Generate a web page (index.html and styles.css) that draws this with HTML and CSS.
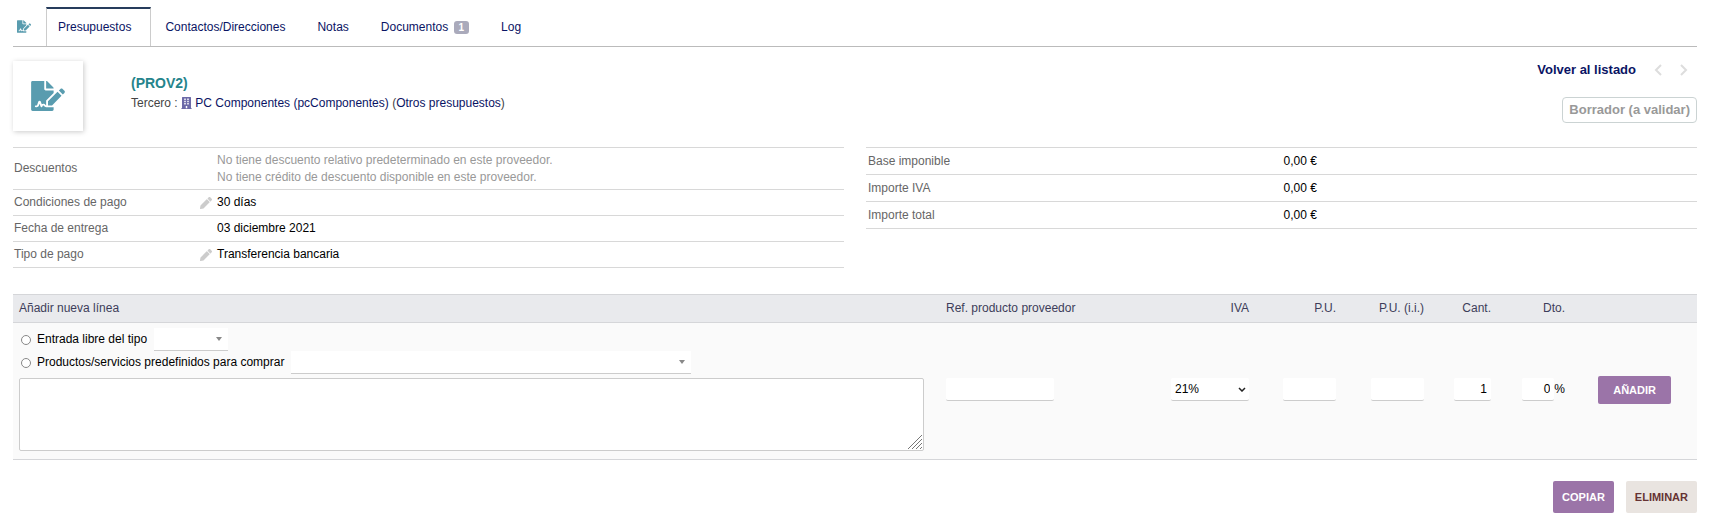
FILE: index.html
```html
<!DOCTYPE html>
<html lang="es">
<head>
<meta charset="utf-8">
<title>Presupuesto (PROV2)</title>
<link rel="stylesheet" href="styles.css">
</head>
<body>
<svg class="defs" aria-hidden="true">
  <symbol id="i-sign" viewBox="0 0 576 512"><path d="M218.170 424.140c-2.950-5.920-8.090-6.520-10.170-6.520s-7.220.59-10.020 6.190l-7.670 15.340c-6.370 12.780-25.030 11.370-29.480-2.090L144 386.590l-10.610 31.880c-5.890 17.660-22.380 29.530-41 29.530H80c-8.840 0-16-7.160-16-16s7.160-16 16-16h12.390c4.830 0 9.110-3.080 10.640-7.660l18.190-54.640c3.300-9.810 12.440-16.410 22.780-16.410s19.480 6.590 22.770 16.410l13.880 41.640c19.750-16.190 54.060-9.700 66 14.160 1.890 3.780 5.490 5.950 9.360 6.260v-82.120l128-127.090V160H248c-13.200 0-24-10.800-24-24V0H24C10.700 0 0 10.700 0 24v464c0 13.300 10.700 24 24 24h336c13.300 0 24-10.700 24-24v-40l-128-.110c-16.120-.310-30.580-9.280-37.830-23.750zM384 121.900c0-6.300-2.500-12.400-7-16.900L279.100 7c-4.500-4.500-10.600-7-17-7H256v128h128v-6.100zm-96 225.060V416h68.990l161.680-162.780-67.880-67.880L288 346.960zm280.540-179.630l-31.870-31.870c-9.940-9.940-26.070-9.940-36.010 0l-27.250 27.250 67.880 67.880 27.250-27.250c9.950-9.940 9.950-26.070 0-36.010z"/></symbol>
  <symbol id="i-building" viewBox="0 0 448 512"><path d="M436 480h-20V24c0-13.255-10.745-24-24-24H56C42.745 0 32 10.745 32 24v456H12c-6.627 0-12 5.373-12 12v20h448v-20c0-6.627-5.373-12-12-12zM128 76c0-6.627 5.373-12 12-12h40c6.627 0 12 5.373 12 12v40c0 6.627-5.373 12-12 12h-40c-6.627 0-12-5.373-12-12V76zm0 96c0-6.627 5.373-12 12-12h40c6.627 0 12 5.373 12 12v40c0 6.627-5.373 12-12 12h-40c-6.627 0-12-5.373-12-12v-40zm52 148h-40c-6.627 0-12-5.373-12-12v-40c0-6.627 5.373-12 12-12h40c6.627 0 12 5.373 12 12v40c0 6.627-5.373 12-12 12zm76 160h-64v-84c0-6.627 5.373-12 12-12h40c6.627 0 12 5.373 12 12v84zm64-172c0 6.627-5.373 12-12 12h-40c-6.627 0-12-5.373-12-12v-40c0-6.627 5.373-12 12-12h40c6.627 0 12 5.373 12 12v40zm0-96c0 6.627-5.373 12-12 12h-40c-6.627 0-12-5.373-12-12v-40c0-6.627 5.373-12 12-12h40c6.627 0 12 5.373 12 12v40zm0-96c0 6.627-5.373 12-12 12h-40c-6.627 0-12-5.373-12-12V76c0-6.627 5.373-12 12-12h40c6.627 0 12 5.373 12 12v40z"/></symbol>
  <symbol id="i-pencil" viewBox="0 0 512 512"><path d="M497.900 142.100l-46.100 46.100c-4.700 4.700-12.300 4.700-17 0l-111-111c-4.700-4.700-4.700-12.300 0-17l46.100-46.100c18.700-18.700 49.100-18.700 67.900 0l60.100 60.100c18.800 18.700 18.800 49.100 0 67.900zM284.200 99.800L21.600 362.400.4 483.900c-2.900 16.400 11.400 30.600 27.800 27.800l121.500-21.300 262.600-262.600c4.700-4.700 4.700-12.300 0-17l-111-111c-4.800-4.700-12.400-4.700-17.100 0z"/></symbol>
</svg>

<nav class="tabs">
  <svg class="tabs-icon" aria-hidden="true"><use href="#i-sign"/></svg>
  <a class="tab tab-active" href="#" aria-current="page">Presupuestos</a>
  <a class="tab" href="#">Contactos/Direcciones</a>
  <a class="tab" href="#">Notas</a>
  <a class="tab" href="#">Documentos <span class="badge">1</span></a>
  <a class="tab" href="#">Log</a>
</nav>

<header class="banner">
  <div class="photo"><svg class="photo-icon" aria-hidden="true"><use href="#i-sign"/></svg></div>
  <div class="ident">
    <h1 class="ref">(PROV2)</h1>
    <div class="third">Tercero : <svg class="building" aria-hidden="true"><use href="#i-building"/></svg> <a href="#">PC Componentes (pcComponentes)</a> (<a href="#">Otros presupuestos</a>)</div>
  </div>
  <div class="side">
    <div class="pager">
      <a class="back" href="#">Volver al listado</a>
      <svg class="chev" viewBox="0 0 8 12" aria-hidden="true"><path d="M7 1 2 6l5 5"/></svg>
      <svg class="chev" viewBox="0 0 8 12" aria-hidden="true"><path d="m1 1 5 5-5 5"/></svg>
    </div>
    <span class="status">Borrador (a validar)</span>
  </div>
</header>

<main>
  <div class="columns">
    <table class="info">
      <tr class="tall"><th scope="row">Descuentos</th><td class="edit"></td><td class="muted">No tiene descuento relativo predeterminado en este proveedor.<br>No tiene crédito de descuento disponible en este proveedor.</td></tr>
      <tr><th scope="row">Condiciones de pago</th><td class="edit"><a href="#" aria-label="Modificar"><svg class="pencil" aria-hidden="true"><use href="#i-pencil"/></svg></a></td><td>30 días</td></tr>
      <tr><th scope="row">Fecha de entrega</th><td class="edit"></td><td>03 diciembre 2021</td></tr>
      <tr><th scope="row">Tipo de pago</th><td class="edit"><a href="#" aria-label="Modificar"><svg class="pencil" aria-hidden="true"><use href="#i-pencil"/></svg></a></td><td>Transferencia bancaria</td></tr>
    </table>
    <table class="info totals">
      <tr><th scope="row">Base imponible</th><td>0,00 €</td></tr>
      <tr><th scope="row">Importe IVA</th><td>0,00 €</td></tr>
      <tr><th scope="row">Importe total</th><td>0,00 €</td></tr>
    </table>
  </div>

  <form>
    <table class="lines">
      <colgroup><col><col class="c-ref"><col class="c-vat"><col class="c-pu"><col class="c-pui"><col class="c-qty"><col class="c-disc"><col class="c-add"></colgroup>
      <thead>
        <tr><th class="left" scope="col">Añadir nueva línea</th><th class="left" scope="col">Ref. producto proveedor</th><th scope="col">IVA</th><th scope="col">P.U.</th><th scope="col">P.U. (i.i.)</th><th scope="col">Cant.</th><th scope="col">Dto.</th><td></td></tr>
      </thead>
      <tbody>
        <tr>
          <td class="left">
            <div class="choice"><input type="radio" name="kind" id="free"><label for="free">Entrada libre del tipo</label><select class="combo combo-s" aria-label="Tipo"><option></option></select></div>
            <div class="choice"><input type="radio" name="kind" id="predef"><label for="predef">Productos/servicios predefinidos para comprar</label><select class="combo combo-l" aria-label="Producto"><option></option></select></div>
            <div class="desc"><textarea aria-label="Descripción"></textarea><svg class="grip" viewBox="0 0 14 14" aria-hidden="true"><path d="M0 14 14 0M4 14 14 4M8 14l6-6M12 14l2-2"/></svg></div>
          </td>
          <td class="left"><input class="field f-ref" type="text" aria-label="Ref. producto proveedor"></td>
          <td><select class="field f-vat" aria-label="IVA"><option>21%</option></select></td>
          <td><input class="field f-pu" type="text" aria-label="P.U."></td>
          <td><input class="field f-pu" type="text" aria-label="P.U. (i.i.)"></td>
          <td><input class="field f-qty" type="text" value="1" aria-label="Cant."></td>
          <td class="disc"><input class="field f-disc" type="text" value="0" aria-label="Dto.">%</td>
          <td class="add"><button class="btn btn-add" type="submit">AÑADIR</button></td>
        </tr>
      </tbody>
    </table>
  </form>

  <div class="actions"><a class="btn" href="#">COPIAR</a><a class="btn btn-delete" href="#">ELIMINAR</a></div>
</main>
</body>
</html>
```
FILE: styles.css
```css
* { box-sizing: border-box; }
body {
  margin: 0;
  padding: 7px 13px 0;
  background: #fff;
  color: #444;
  font: 12px/17px "Liberation Sans", Arial, sans-serif;
}
a { color: #0a1464; text-decoration: none; }
input, select, textarea, button { font: inherit; margin: 0; }
.defs { position: absolute; width: 0; height: 0; }

.tabs { display: flex; height: 40px; border-bottom: 1px solid #bbb; }
.tabs-icon { width: 14px; height: 13px; margin: 13px 15px 0 4px; fill: #599caf; }
.tab { padding: 12px 18px 0 14px; }
.tab-active { padding: 10px 19px 0 11px; border: solid #ccc; border-width: 2px 1px 0; border-top-color: #263c5c; }
.badge { display: inline-block; margin-left: 2px; padding: 0 5px; border-radius: 3px; background: #aaaabb; color: #fff; font: bold 10px/13px "Liberation Sans", Arial, sans-serif; }

.banner { display: flex; height: 100px; padding-top: 14px; }
.photo { width: 70px; height: 70px; padding: 20px 18px; box-shadow: 1px 1px 5px #ccc; }
.photo-icon { display: block; width: 34px; height: 30px; fill: #599caf; }
.ident { flex: 1; margin-left: 48px; padding-top: 13px; }
.ref { margin: 0; color: #25848c; font-size: 14px; line-height: 18px; }
.third { line-height: 22px; }
.building { width: 11px; height: 12px; fill: #6c6aa8; vertical-align: -2px; }
.side { display: flex; flex-direction: column; align-items: flex-end; gap: 19px; }
.pager { display: flex; align-items: center; gap: 18px; padding-right: 9px; font-size: 13px; font-weight: bold; }
.chev { width: 8px; height: 12px; fill: none; stroke: #ddd; stroke-width: 2px; }
.status { padding: 3px 6px; border: 1px solid #cbd3d3; border-radius: 4px; color: #999; font-size: 13px; font-weight: bold; line-height: 18px; }

.columns { display: grid; grid-template-columns: 1fr 1fr; gap: 22px; align-items: start; }
table { width: 100%; border-collapse: collapse; table-layout: fixed; }
.info { border-top: 1px solid #d8d8d8; }
.info tr { height: 26px; border-bottom: 1px solid #d8d8d8; }
.info .tall { height: 42px; }
.info th { width: 185px; padding: 0 1px; color: #666; font-weight: normal; text-align: left; }
.info td { padding: 0 2px; color: #000; }
.info .edit { width: 17px; }
.info .muted { color: #999; }
.totals th { width: 50%; padding: 0 2px; }
.pencil { display: block; width: 12px; height: 12px; fill: #ccc; }
.totals tr { height: 27px; }

.lines { margin-top: 26px; border: solid #d5d6d9; border-width: 1px 0; background: #fafafa; }
.lines thead { background: #e9eaed; border-bottom: 1px solid #d5d6d9; color: #3d3d5a; }
.lines thead tr { height: 28px; }
.lines th { font-weight: normal; }
.lines th, .lines thead td { padding: 0 6px 1px; text-align: right; }
.lines tbody td { padding: 5px 6px 8px; color: #000; text-align: right; }
.lines .left, .lines tbody .left { text-align: left; }
.c-ref { width: 178px; }
.c-vat { width: 137px; }
.c-pu { width: 87px; }
.c-pui { width: 88px; }
.c-qty { width: 67px; }
.c-disc { width: 74px; }
.c-add { width: 126px; }
.choice { display: flex; align-items: center; height: 23px; }
.choice input { appearance: none; width: 10px; height: 10px; margin: 1px 6px 0 2px; border: 1px solid #888; border-radius: 50%; background: #fff; }
.combo, .field { height: 23px; border: 0; border-bottom: 1px solid #ccc; border-radius: 2px; background: #fff; color: #000; }
.combo { appearance: none; margin-left: 7px; border-radius: 0; background: #fff url("data:image/svg+xml,%3Csvg xmlns='http://www.w3.org/2000/svg' width='6' height='4'%3E%3Cpath d='M0 0h6L3 4z' fill='%23888'/%3E%3C/svg%3E") right 6px center no-repeat; }
.combo-s { width: 74px; }
.combo-l { width: 400px; }
.desc { position: relative; margin: 4px 10px 0 0; }
.desc textarea { display: block; width: 100%; height: 73px; border: 1px solid #ccc; border-radius: 2px; background: #fff; resize: none; }
.grip { position: absolute; right: 2px; bottom: 2px; width: 14px; height: 14px; stroke: #777; stroke-width: 1px; }
.field { padding: 0 4px; text-align: right; }
.f-ref { width: 108px; }
.f-vat { appearance: none; width: 78px; text-align: left; background: #fff url("data:image/svg+xml,%3Csvg xmlns='http://www.w3.org/2000/svg' width='8' height='5'%3E%3Cpath d='M1 1l3 3 3-3' fill='none' stroke='%23222' stroke-width='1.500'/%3E%3C/svg%3E") right 3px center no-repeat; }
.f-pu { width: 53px; }
.f-qty { width: 37px; }
.f-disc { width: 32px; }
.lines tbody .disc { white-space: nowrap; }
.lines tbody .add { padding-right: 26px; }

.btn { display: inline-block; padding: 8px 9px; border: 0; border-radius: 2px; background: #9b74a8; color: #fff; font-size: 11px; font-weight: bold; line-height: 16px; }
.btn-add { padding: 6px 15px; }
.btn-delete { background: #e9e4e0; color: #633; }
.actions { display: flex; justify-content: flex-end; gap: 12px; margin-top: 21px; }
```
